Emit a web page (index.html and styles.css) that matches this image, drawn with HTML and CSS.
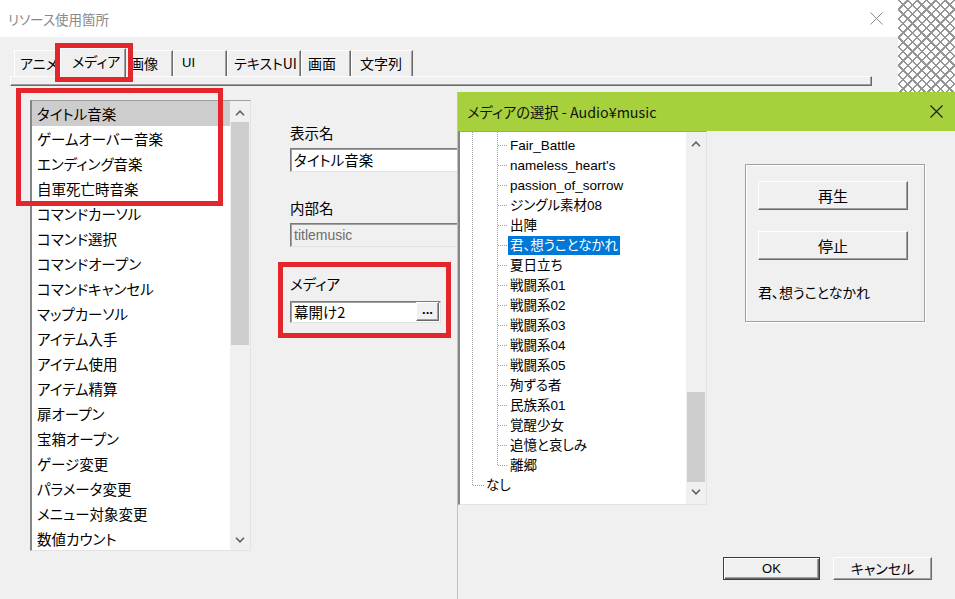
FILE: index.html
```html
<!DOCTYPE html>
<html lang="ja">
<head>
<meta charset="utf-8">
<title>リソース使用箇所</title>
<link rel="stylesheet" href="styles.css">
</head>
<body>
<div class="desktop">
  <div class="main">
    <div class="titlebar">
      <span class="title">リソース使用箇所</span>
      <svg class="close-main" width="13" height="13" viewBox="0 0 13 13"><path d="M0.5 0.5 L12.5 12.5 M12.5 0.5 L0.5 12.5" stroke="#8c8c8c" stroke-width="1" fill="none"/></svg>
    </div>
    <div class="main-body">
      <div class="tabs">
        <div class="tab">アニメ</div>
        <div class="tab sel">メディア</div>
        <div class="tab">画像</div>
        <div class="tab">UI</div>
        <div class="tab">テキストUI</div>
        <div class="tab">画面</div>
        <div class="tab">文字列</div>
      </div>
      <div class="tabpanel"></div>
      <div class="content">
        <div class="listbox">
          <ul class="items">
            <li class="sel">タイトル音楽</li>
            <li>ゲームオーバー音楽</li>
            <li>エンディング音楽</li>
            <li>自軍死亡時音楽</li>
            <li>コマンドカーソル</li>
            <li>コマンド選択</li>
            <li>コマンドオープン</li>
            <li>コマンドキャンセル</li>
            <li>マップカーソル</li>
            <li>アイテム入手</li>
            <li>アイテム使用</li>
            <li>アイテム精算</li>
            <li>扉オープン</li>
            <li>宝箱オープン</li>
            <li>ゲージ変更</li>
            <li>パラメータ変更</li>
            <li>メニュー対象変更</li>
            <li>数値カウント</li>
          </ul>
          <div class="vscroll list-scroll">
            <div class="arrow"><svg width="10" height="6" viewBox="0 0 10 6"><path d="M1 5.2 L5 1.2 L9 5.2" fill="none" stroke="#606060" stroke-width="1.6"/></svg></div>
            <div class="track"><div class="thumb"></div></div>
            <div class="arrow"><svg width="10" height="6" viewBox="0 0 10 6"><path d="M1 0.8 L5 4.8 L9 0.8" fill="none" stroke="#606060" stroke-width="1.6"/></svg></div>
          </div>
        </div>
        <div class="form">
          <div class="label">表示名</div>
          <div class="field">タイトル音楽</div>
          <div class="label l2">内部名</div>
          <div class="field disabled">titlemusic</div>
          <div class="label l3">メディア</div>
          <div class="field media"><span class="media-val">幕開け2</span><span class="dots">...</span></div>
        </div>
      </div>
    </div>
    <div class="mark mark-tab"></div>
    <div class="mark mark-list"></div>
    <div class="mark mark-media"></div>
  </div>
  <div class="checker"></div>

  <div class="dialog">
    <div class="dlg-title">
      <span>メディアの選択 - Audio¥music</span>
      <svg width="13" height="13" viewBox="0 0 13 13"><path d="M0.5 0.5 L12.5 12.5 M12.5 0.5 L0.5 12.5" stroke="#1a1a1a" stroke-width="1.1" fill="none"/></svg>
    </div>
    <div class="dlg-body">
      <div class="dlg-main">
        <div class="tree">
          <ul class="tree-items">
            <li class="child"><span>Fair_Battle</span></li>
            <li class="child"><span>nameless_heart's</span></li>
            <li class="child"><span>passion_of_sorrow</span></li>
            <li class="child"><span>ジングル素材08</span></li>
            <li class="child"><span>出陣</span></li>
            <li class="child"><span class="sel">君、想うことなかれ</span></li>
            <li class="child"><span>夏日立ち</span></li>
            <li class="child"><span>戦闘系01</span></li>
            <li class="child"><span>戦闘系02</span></li>
            <li class="child"><span>戦闘系03</span></li>
            <li class="child"><span>戦闘系04</span></li>
            <li class="child"><span>戦闘系05</span></li>
            <li class="child"><span>殉ずる者</span></li>
            <li class="child"><span>民族系01</span></li>
            <li class="child"><span>覚醒少女</span></li>
            <li class="child"><span>追憶と哀しみ</span></li>
            <li class="child"><span>離郷</span></li>
            <li class="root"><span>なし</span></li>
          </ul>
          <div class="vscroll tree-scroll">
            <div class="arrow"><svg width="10" height="6" viewBox="0 0 10 6"><path d="M1 5.2 L5 1.2 L9 5.2" fill="none" stroke="#606060" stroke-width="1.6"/></svg></div>
            <div class="track"><div class="thumb"></div></div>
            <div class="arrow"><svg width="10" height="6" viewBox="0 0 10 6"><path d="M1 0.8 L5 4.8 L9 0.8" fill="none" stroke="#606060" stroke-width="1.6"/></svg></div>
          </div>
        </div>
        <div class="preview">
          <div class="group">
            <button class="btn wide">再生</button>
            <button class="btn wide stop">停止</button>
            <div class="now">君、想うことなかれ</div>
          </div>
        </div>
      </div>
      <div class="dlg-footer">
        <button class="btn ok">OK</button>
        <button class="btn cancel">キャンセル</button>
      </div>
    </div>
  </div>
</div>
</body>
</html>
```

FILE: styles.css
```css
* { box-sizing: border-box; margin: 0; padding: 0; }
html, body { width: 955px; height: 599px; overflow: hidden; }
body {
  font-family: "Noto Sans CJK JP", "Liberation Sans", sans-serif;
  font-feature-settings: "palt" 1;
  color: #000;
  background: #fff;
}
ul { list-style: none; }

.desktop { position: relative; width: 955px; height: 599px; display: flex; overflow: hidden; }

/* main window */
.main { position: relative; flex: none; width: 898px; height: 599px; display: flex; flex-direction: column; }
.titlebar { flex: none; height: 37px; background: #fff; display: flex; align-items: center; justify-content: space-between; padding: 0 15px 0 8px; }
.title { font-size: 13.5px; color: #8a8a8a; }
.close-main { display: block; }

.main-body { flex: 1; background: #f0f0f0; padding: 11px 0 0 10px; }

.tabs { display: flex; align-items: flex-end; height: 28px; padding-left: 4px; position: relative; z-index: 1; }
.tab {
  flex: none; height: 26px; line-height: 24px; font-size: 14px; white-space: nowrap; overflow: hidden;
  border-top: 1px solid #fff; border-left: 1px solid #fff; border-right: 1px solid #696969;
  box-shadow: inset -1px 0 0 #a0a0a0; background: #f0f0f0;
}
.tab:nth-child(1) { width: 48px; padding-left: 5px; }
.tab:nth-child(2) { width: 66px; padding-left: 11px; }
.tab:nth-child(3) { width: 49px; padding-left: 5px; }
.tab:nth-child(4) { width: 54px; padding-left: 8px; font-family: "Liberation Sans", sans-serif; font-size: 13px; }
.tab:nth-child(5) { width: 74px; padding-left: 6px; }
.tab:nth-child(6) { width: 50px; padding-left: 6px; }
.tab:nth-child(7) { width: 62px; padding-left: 8px; }
.tab.sel { height: 30px; margin: 0 -2px -2px; padding-bottom: 4px; position: relative; z-index: 2; }

.tabpanel {
  width: 862px; height: 10px;
  border: 1px solid; border-color: #fff #696969 #696969 #fff;
  box-shadow: inset -1px -1px 0 #a0a0a0;
}

.content { display: flex; align-items: flex-start; margin-top: 14px; padding-left: 20px; }

.listbox {
  flex: none; width: 221px; height: 451px; display: flex; background: #fff;
  border-style: solid; border-width: 1px 1px 1px 2px; border-color: #a0a0a0 #e3e3e3 #e3e3e3 #858585;
  overflow: hidden;
}
.items { flex: 1; overflow: hidden; }
.items li { height: 25px; line-height: 25px; padding-left: 5px; font-size: 14.5px; white-space: nowrap; }
.items li.sel { background: #cdcdcd; }

.vscroll { flex: none; width: 20px; display: flex; flex-direction: column; background: #f0f0f0; }
.vscroll .arrow { flex: none; height: 20px; display: flex; align-items: center; justify-content: center; }
.vscroll .arrow svg { display: block; }
.vscroll .track { flex: 1; display: flex; flex-direction: column; }
.vscroll .thumb { background: #cdcdcd; margin: 0 1px; }
.list-scroll .thumb { height: 223px; margin-top: 1px; }
.list-scroll .arrow:first-child { padding-top: 3px; }
.tree-scroll { padding-bottom: 2px; }
.tree-scroll .track { justify-content: flex-end; }
.tree-scroll .thumb { height: 90px; }
.tree-scroll .arrow:first-child { padding-top: 4px; }

.form { margin-left: 39px; padding-top: 23px; width: 200px; }
.label { height: 20px; line-height: 20px; font-size: 14.5px; }
.label.l2 { margin-top: 26px; }
.label.l3 { margin-top: 27px; }
.field {
  margin-top: 5px; height: 24px; line-height: 22px; font-size: 14.5px; padding-left: 3px; background: #fff;
  border-style: solid; border-width: 1px; border-color: #7a7a7a #e3e3e3 #e3e3e3 #7a7a7a;
  box-shadow: inset 1px 1px 0 #a0a0a0; white-space: nowrap; overflow: hidden;
}
.field.disabled { background: #f0f0f0; color: #6d6d6d; font-family: "Liberation Sans", sans-serif; font-size: 14px; }
.field.media { margin-top: 7px; width: 151px; height: 22px; line-height: 20px; display: flex; justify-content: space-between; padding-right: 1px; }
.dots {
  width: 23px; height: 19px; background: #f0f0f0; text-align: center;
  font-family: "Liberation Sans", sans-serif; font-weight: bold; font-size: 13px; line-height: 14px;
  border: 1px solid; border-color: #fff #696969 #696969 #fff; box-shadow: inset -1px -1px 0 #a0a0a0;
}

.mark { position: absolute; border: 5px solid #e3262b; z-index: 5; }
.mark-tab { left: 55px; top: 43px; width: 78px; height: 39px; }
.mark-list { left: 16px; top: 88px; width: 207px; height: 118px; }
.mark-media { left: 278px; top: 262px; width: 173px; height: 76px; }

.checker {
  flex: none; width: 57px; height: 92px; background-color: #fff;
  background-image:
    repeating-linear-gradient(45deg, transparent 0 5px, #959595 5px 6.6px),
    repeating-linear-gradient(-45deg, transparent 0 5px, #959595 5px 6.6px);
}

/* media dialog */
.dialog {
  position: absolute; left: 457px; top: 92px; width: 498px; height: 507px; z-index: 10;
  display: flex; flex-direction: column; background: #f0f0f0; border-left: 1px solid #b5d67a;
}
.dlg-title {
  flex: none; height: 39px; background: #a6d13c; display: flex; align-items: center; justify-content: space-between;
  padding: 0 12px 0 9px; font-size: 14.3px; color: #111;
}
.dlg-title svg { display: block; }
.dlg-body { flex: 1; display: flex; flex-direction: column; }
.dlg-main { display: flex; height: 374px; }
.tree {
  flex: none; width: 249px; height: 374px; display: flex; background: #fff;
  border-style: solid; border-width: 1px 1px 1px 2px; border-color: #a0a0a0 #e3e3e3 #e3e3e3 #858585;
}
.tree-items {
  flex: 1; padding-top: 3px; overflow: hidden;
  font-family: "Liberation Sans", "Noto Sans CJK JP", sans-serif; font-size: 13.5px;
  background-image:
    repeating-linear-gradient(to bottom, #a0a0a0 0 1px, transparent 1px 2px),
    repeating-linear-gradient(to bottom, #a0a0a0 0 1px, transparent 1px 2px);
  background-size: 1px 353px, 1px 333px;
  background-position: 12px 0, 37px 0;
  background-repeat: no-repeat;
}
.tree-items li {
  height: 20px; display: flex; align-items: center; white-space: nowrap;
  background-image: repeating-linear-gradient(to right, #a0a0a0 0 1px, transparent 1px 2px);
  background-repeat: no-repeat;
}
.tree-items li.child { padding-left: 48px; background-size: 10px 1px; background-position: 38px 10px; }
.tree-items li.root { padding-left: 24px; background-size: 12px 1px; background-position: 13px 10px; }
.tree-items span { padding: 0 2px; line-height: 19px; }
.tree-items span.sel { background: #0078d7; color: #fff; }

.preview { padding: 33px 0 0 38px; }
.group {
  width: 180px; height: 158px; border: 1px solid #a0a0a0; box-shadow: inset 1px 1px 0 #fff, 1px 1px 0 #fff;
  padding: 16px 0 0 12px;
}
.btn {
  display: block; font-family: inherit; font-feature-settings: "palt" 1; color: #000; background: #f0f0f0;
  border: 1px solid; border-color: #fff #696969 #696969 #fff; box-shadow: inset -1px -1px 0 #a0a0a0;
  cursor: default;
}
.btn.wide { width: 150px; height: 29px; font-size: 15px; }
.btn.stop { margin-top: 21px; }
.now { margin-top: 22px; font-size: 14px; line-height: 20px; }

.dlg-footer { display: flex; justify-content: flex-end; gap: 13px; padding: 52px 23px 0 0; }
.btn.ok {
  width: 97px; height: 23px; font-family: "Liberation Sans", sans-serif; font-size: 13px;
  border: 1px solid #3c3c3c; box-shadow: inset 1px 1px 0 #fff, inset -1px -1px 0 #696969, inset -2px -2px 0 #a0a0a0;
}
.btn.cancel { width: 99px; height: 23px; font-size: 14px; line-height: 19px; }
```
